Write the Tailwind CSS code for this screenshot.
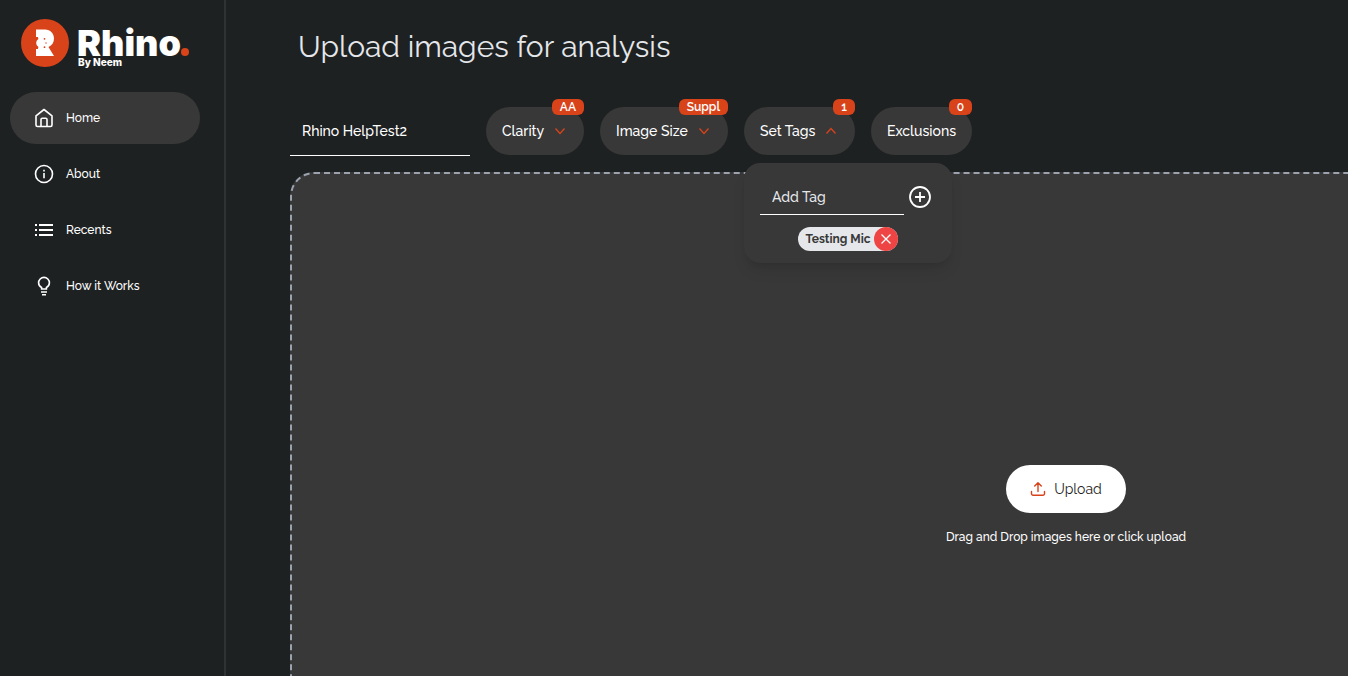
<!DOCTYPE html>
<html lang="en">
<head>
    <meta charset="UTF-8">
    <meta name="viewport" content="width=device-width, initial-scale=1.0">
    <title>Rhino by Neem</title>
    <script src="https://cdn.jsdelivr.net/npm/@tailwindcss/browser@4"></script>
</head>
<body class="h-screen overflow-hidden bg-[#1e2122] font-[Raleway,Lato,sans-serif] text-white">
    <div class="flex h-full">

        <!-- Sidebar -->
        <aside class="w-[226px] shrink-0 border-r-2 border-[#303233]">
            <a href="#" class="block px-5 pt-4" aria-label="Rhino by Neem">
                <svg class="h-14 w-[172px]" viewBox="0 0 172 56">
                    <circle cx="25" cy="27" r="24" fill="#d9431a"/>
                    <path fill="#fff" d="M16 13.500h9c5.500 0 9 4 9 9 0 4-2 7-5.500 8.500L34 40H16v-7h2v-12h-2z"/>
                    <circle cx="21" cy="27" r="4.800" fill="#fff"/>
                    <g fill="#d9431a">
                        <circle cx="17.300" cy="22.600" r="1.100"/>
                        <circle cx="24.500" cy="22.800" r="0.900"/>
                        <circle cx="26" cy="27" r="0.700"/>
                        <circle cx="17.300" cy="31.400" r="1.100"/>
                        <circle cx="24.500" cy="31.200" r="0.900"/>
                    </g>
                    <text x="57" y="40" fill="#fff" font-family="Inter, sans-serif" font-size="36" font-weight="900">Rhino</text>
                    <circle cx="165" cy="36" r="4" fill="#d9431a"/>
                    <text x="58" y="50" fill="#fff" font-family="Inter, sans-serif" font-size="10" font-weight="800">By Neem</text>
                </svg>
            </a>
            <nav class="mt-5 flex flex-col gap-1 pr-6 pl-[10px] text-xs font-medium">
                <a href="#" class="flex h-[52px] items-center gap-3 rounded-full bg-[#383838] px-6">
                    <svg class="size-5" viewBox="0 0 20 20" fill="none" stroke="currentColor" stroke-width="1.600" stroke-linejoin="round">
                        <path d="M2 7.800 10 1.500l8 6.300V17a1.500 1.500 0 0 1-1.500 1.500h-13A1.500 1.500 0 0 1 2 17z"/>
                        <path d="M7 18.500v-7a1.300 1.300 0 0 1 1.300-1.300h3.400a1.300 1.300 0 0 1 1.300 1.300v7"/>
                    </svg>
                    Home
                </a>
                <a href="#" class="flex h-[52px] items-center gap-3 rounded-full px-6">
                    <svg class="size-5" viewBox="0 0 20 20" fill="none" stroke="currentColor" stroke-width="1.600">
                        <circle cx="10" cy="10" r="8.500"/>
                        <path d="M10 9v5.300M10 5.700v1.800"/>
                    </svg>
                    About
                </a>
                <a href="#" class="flex h-[52px] items-center gap-3 rounded-full px-6">
                    <svg class="size-5" viewBox="0 0 20 20" fill="none" stroke="currentColor" stroke-width="2">
                        <path d="M1 5h2M1 10h2M1 15h2M5 5h14M5 10h14M5 15h14"/>
                    </svg>
                    Recents
                </a>
                <a href="#" class="flex h-[52px] items-center gap-3 rounded-full px-6">
                    <svg class="size-5" viewBox="0 0 20 20" fill="none" stroke="currentColor" stroke-width="1.600">
                        <path d="M7.600 13v-1.500C5.600 10.500 4.600 9 4.600 6.800a5.400 5.400 0 0 1 10.800 0c0 2.200-1 3.700-3 4.700V13z"/>
                        <path d="M7 16h6M8 18.800h4"/>
                    </svg>
                    How it Works
                </a>
            </nav>
        </aside>

        <!-- Main content -->
        <main class="min-w-0 flex-1 overflow-hidden pt-6 pl-16">
            <h1 class="pl-2 text-3xl leading-[46px] text-[#e5e7eb]">Upload images for analysis</h1>

            <div class="mt-9 flex items-center gap-4 text-sm font-medium">
                <input type="text" value="Rhino HelpTest2" aria-label="Project name" class="h-[50px] w-[180px] border-b border-white bg-transparent px-3 outline-none">

                <button type="button" class="relative flex h-12 w-[98px] items-center justify-between rounded-full bg-[#383838] px-4 whitespace-nowrap">
                    Clarity
                    <svg class="h-4 w-4" viewBox="0 0 16 16" fill="none" stroke="#d9431a" stroke-width="1.300"><path d="m3.500 5.500 4.500 5 4.500-5"/></svg>
                    <span class="absolute -top-2 right-0 h-4 rounded-md bg-[#d9431a] px-2 text-xs leading-4 font-semibold">AA</span>
                </button>

                <button type="button" class="relative flex h-12 w-32 items-center justify-between rounded-full bg-[#383838] px-4 whitespace-nowrap">
                    Image Size
                    <svg class="h-4 w-4" viewBox="0 0 16 16" fill="none" stroke="#d9431a" stroke-width="1.300"><path d="m3.500 5.500 4.500 5 4.500-5"/></svg>
                    <span class="absolute -top-2 right-0 h-4 rounded-md bg-[#d9431a] px-2 text-xs leading-4 font-semibold">Suppl</span>
                </button>

                <div class="relative">
                    <button type="button" aria-expanded="true" class="relative flex h-12 w-[111px] items-center justify-between rounded-full bg-[#383838] px-4 whitespace-nowrap">
                        Set Tags
                        <svg class="h-4 w-4" viewBox="0 0 16 16" fill="none" stroke="#d9431a" stroke-width="1.300"><path d="m3.500 10.500 4.500-5 4.500 5"/></svg>
                        <span class="absolute -top-2 right-0 h-4 rounded-md bg-[#d9431a] px-2 text-xs leading-4 font-semibold">1</span>
                    </button>

                    <!-- Tags dropdown -->
                    <div class="absolute top-14 left-0 z-10 w-52 rounded-2xl bg-[#383838] px-4 pt-4 pb-3 shadow-lg">
                        <div class="flex items-center gap-1">
                            <input type="text" placeholder="Add Tag" aria-label="Add tag" class="h-9 w-36 border-b border-white bg-transparent px-3 outline-none placeholder:text-[#e5e7eb]">
                            <button type="button" aria-label="Add">
                                <svg class="size-6" viewBox="0 0 24 24" fill="none" stroke="currentColor" stroke-width="1.800">
                                    <circle cx="12" cy="12" r="10"/>
                                    <path d="M12 7v10M7 12h10"/>
                                </svg>
                            </button>
                        </div>
                        <div class="mt-3 flex justify-center">
                            <span class="flex h-6 items-center gap-1 rounded-full bg-[#e5e7eb] pl-2 text-xs font-bold text-[#383838]">
                                Testing Mic
                                <button type="button" aria-label="Remove tag" class="flex size-6 items-center justify-center rounded-full bg-[#ef4444] text-white">
                                    <svg class="size-4" viewBox="0 0 16 16" fill="none" stroke="currentColor" stroke-width="1.300"><path d="m3.500 3.500 9 9M12.500 3.500l-9 9"/></svg>
                                </button>
                            </span>
                        </div>
                    </div>
                </div>

                <button type="button" class="relative flex h-12 w-[101px] items-center justify-center rounded-full bg-[#383838] px-4 whitespace-nowrap">
                    Exclusions
                    <span class="absolute -top-2 right-0 h-4 rounded-md bg-[#d9431a] px-2 text-xs leading-4 font-semibold">0</span>
                </button>
            </div>

            <!-- Drop zone -->
            <section class="mt-4 flex min-h-[666px] min-w-[1552px] flex-col items-center justify-center gap-4 rounded-3xl border-2 border-dashed border-[#9ca3af] bg-[#383838]">
                <button type="button" class="flex h-12 items-center gap-2 rounded-full bg-white px-6 text-sm text-[#1e2122]">
                    <svg class="size-4" viewBox="0 0 16 16" fill="none" stroke="#d9431a" stroke-width="1.400" stroke-linecap="round" stroke-linejoin="round">
                        <path d="M8 10.500V2M4.700 5 8 1.700 11.300 5"/>
                        <path d="M1.500 10.500v2.300a1.500 1.500 0 0 0 1.500 1.500h10a1.500 1.500 0 0 0 1.500-1.500v-2.300"/>
                    </svg>
                    Upload
                </button>
                <p class="text-xs leading-4 font-medium">Drag and Drop images here or click upload</p>
            </section>
        </main>
    </div>
</body>
</html>
